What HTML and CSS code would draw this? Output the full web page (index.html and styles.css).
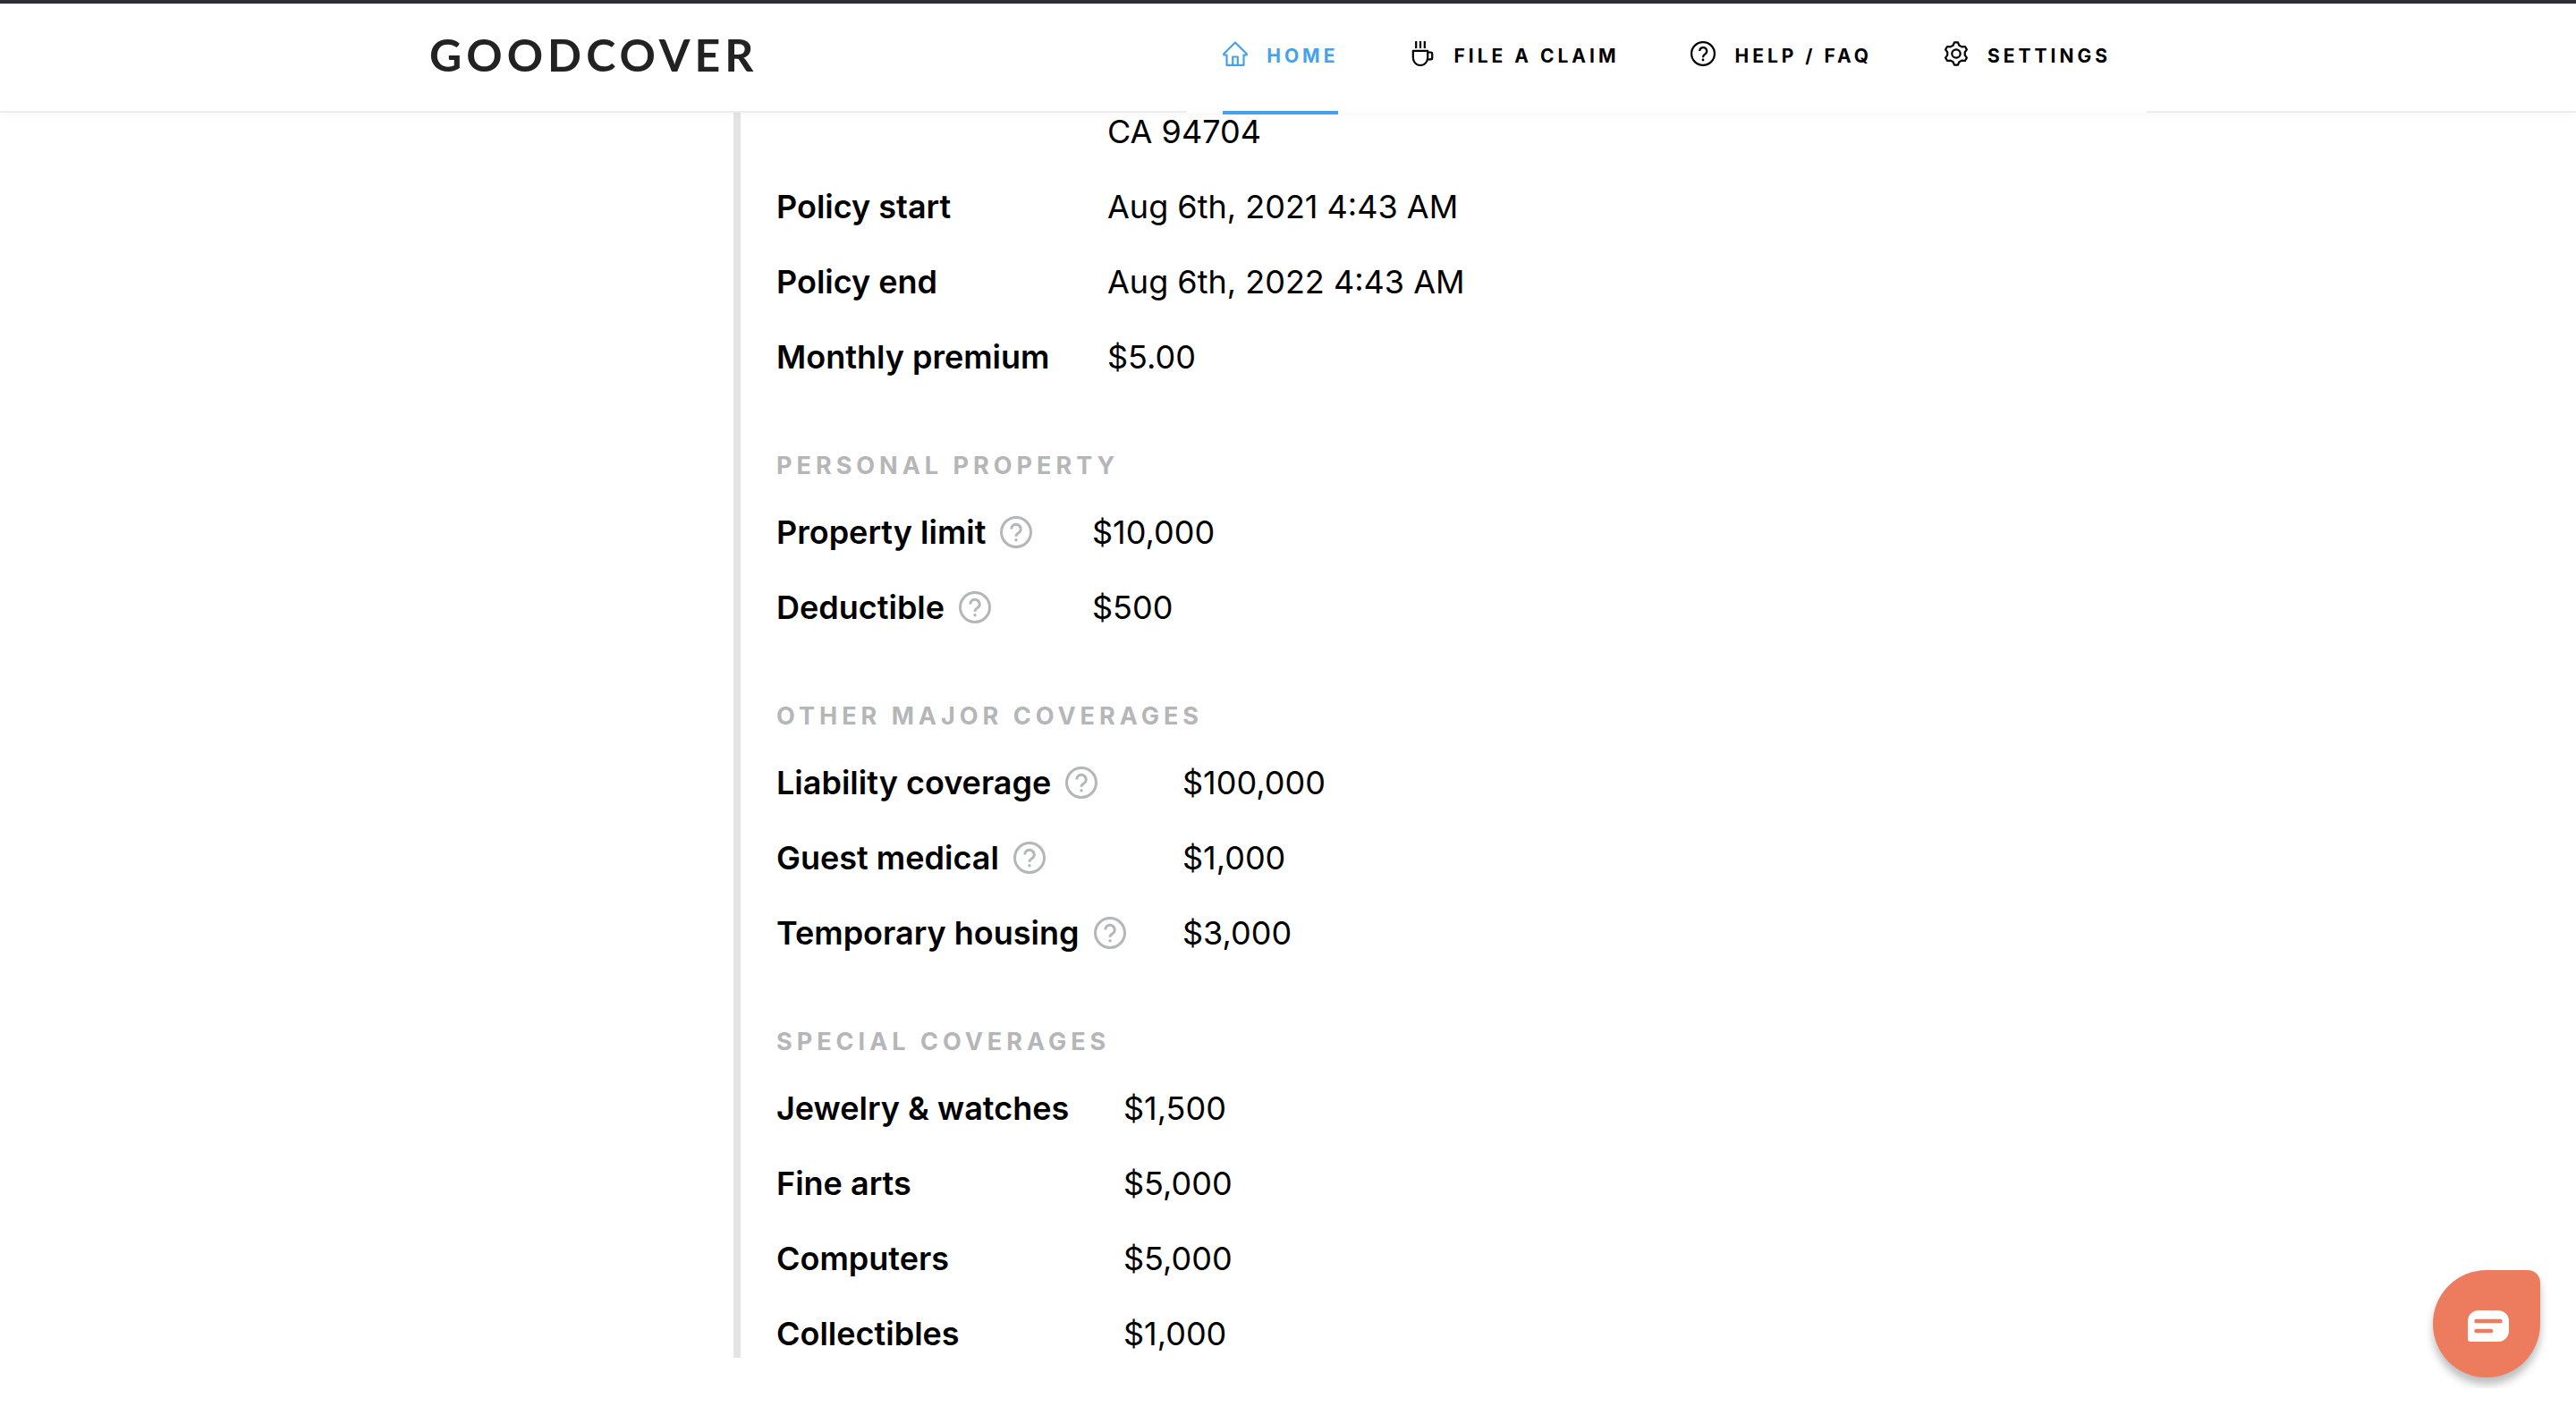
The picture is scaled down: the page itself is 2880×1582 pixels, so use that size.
FILE: index.html
```html
<!DOCTYPE html>
<html lang="en">
<head>
<meta charset="utf-8">
<title>Goodcover</title>
<link rel="stylesheet" href="styles.css">
</head>
<body>
<svg class="sprite" width="0" height="0" aria-hidden="true">
  <symbol id="help" viewBox="0 0 36 36">
    <circle cx="18" cy="18" r="16.5"/>
    <path d="M12.8 14.4a5.2 5.2 0 1 1 7.6 4.6c-1.700.9-2.400 1.700-2.400 3.800"/>
    <circle class="dot" cx="18" cy="26.700" r="1.700"/>
  </symbol>
</svg>
<header class="topbar">
  <div class="topbar-inner">
    <a class="logo" href="#">GOODCOVER</a>
    <nav class="nav">
      <a class="nav-link active" href="#">
        <svg class="nav-icon" viewBox="0 0 28 28"><path d="M4.500 26.800V15.500H1.200v-1.200L14 1.500l12.800 12.800v1.200h-3.300v11.300z"/><path d="M11.200 26.800v-9.300h5.600v9.300"/></svg>
        <span>HOME</span>
      </a>
      <a class="nav-link" href="#">
        <svg class="nav-icon" viewBox="0 0 28 28"><path d="M3.800 10.800h16.400v7.200c0 5-3.200 9-8.200 9s-8.200-4-8.200-9zM20.200 12.500h3.600q1.400 0 1.400 1.400v5q0 1.400-1.400 1.400h-3.900M7.200 0v8M12 0v8M16.800 0v8"/></svg>
        <span>FILE A CLAIM</span>
      </a>
      <a class="nav-link" href="#">
        <svg class="nav-icon" viewBox="0 0 28 28"><circle cx="14" cy="14" r="12.900"/><path d="M10.200 11a4 4 0 1 1 5.800 3.700c-1.300.7-2 1.500-2 3.500"/><circle class="dot" cx="14" cy="21" r="1.400"/></svg>
        <span>HELP / FAQ</span>
      </a>
      <a class="nav-link" href="#">
        <svg class="nav-icon" viewBox="0 0 28 28"><circle cx="14" cy="14" r="4.700"/><path d="M10.600 4.700 12 1.400h4l1.400 3.300 2.950 1.700L23.900 6l2 3.400-2.150 2.900v3.400l2.150 2.900-2 3.400-3.550-.4-2.950 1.700-1.400 3.300h-4l-1.400-3.300-2.950-1.700-3.550.4-2-3.400 2.150-2.900v-3.400L2.100 9.400l2-3.400 3.550.4z"/></svg>
        <span>SETTINGS</span>
      </a>
    </nav>
  </div>
</header>

<main class="policy">
  <section class="group">
    <table class="facts facts-policy">
      <tr><td></td><td>CA 94704</td></tr>
      <tr><th scope="row">Policy start</th><td>Aug 6th, 2021 4:43 AM</td></tr>
      <tr><th scope="row">Policy end</th><td>Aug 6th, 2022 4:43 AM</td></tr>
      <tr><th scope="row">Monthly premium</th><td>$5.00</td></tr>
    </table>
  </section>

  <section class="group">
    <h2>PERSONAL PROPERTY</h2>
    <table class="facts facts-property">
      <tr><th scope="row"><span class="label">Property limit <button class="help" type="button" aria-label="About property limit"><svg><use href="#help"/></svg></button></span></th><td>$10,000</td></tr>
      <tr><th scope="row"><span class="label">Deductible <button class="help" type="button" aria-label="About deductible"><svg><use href="#help"/></svg></button></span></th><td>$500</td></tr>
    </table>
  </section>

  <section class="group">
    <h2>OTHER MAJOR COVERAGES</h2>
    <table class="facts facts-major">
      <tr><th scope="row"><span class="label">Liability coverage <button class="help" type="button" aria-label="About liability coverage"><svg><use href="#help"/></svg></button></span></th><td>$100,000</td></tr>
      <tr><th scope="row"><span class="label">Guest medical <button class="help" type="button" aria-label="About guest medical"><svg><use href="#help"/></svg></button></span></th><td>$1,000</td></tr>
      <tr><th scope="row"><span class="label">Temporary housing <button class="help" type="button" aria-label="About temporary housing"><svg><use href="#help"/></svg></button></span></th><td>$3,000</td></tr>
    </table>
  </section>

  <section class="group">
    <h2>SPECIAL COVERAGES</h2>
    <table class="facts facts-special">
      <tr><th scope="row">Jewelry &amp; watches</th><td>$1,500</td></tr>
      <tr><th scope="row">Fine arts</th><td>$5,000</td></tr>
      <tr><th scope="row">Computers</th><td>$5,000</td></tr>
      <tr><th scope="row">Collectibles</th><td>$1,000</td></tr>
    </table>
  </section>
</main>

<button class="chat" type="button" aria-label="Open chat">
  <svg viewBox="0 0 46 35"><path fill="#fff" d="M12 0h22a12 12 0 0 1 12 12v11a12 12 0 0 1-12 12H3a3 3 0 0 1-3-3V12A12 12 0 0 1 12 0z"/><path stroke="#ed7b5e" stroke-width="4.400" stroke-linecap="round" d="M9.500 12h27M9.500 23h16.500"/></svg>
</button>
</body>
</html>
```
FILE: styles.css
```css
* { box-sizing: border-box; }

body {
  margin: 0;
  background: #fff;
  color: #000;
  font-family: Inter, "Liberation Sans", sans-serif;
  font-size: 36px;
  line-height: 54px;
}

.sprite { position: absolute; }

/* Header */
.topbar {
  position: sticky;
  top: 0;
  z-index: 2;
  height: 126px;
  background: #fff;
  border-top: 4px solid #2e2c34;
  border-bottom: 2px solid #ededed;
  box-shadow: 0 2px 10px rgba(0, 0, 0, 0.04);
}

.topbar-inner {
  display: flex;
  justify-content: space-between;
  max-width: 1920px;
  height: 122px;
  margin: 0 auto;
}

.logo {
  align-self: center;
  padding-bottom: 8px;
  color: #222;
  font-family: Lato, sans-serif;
  font-size: 50px;
  font-weight: 700;
  letter-spacing: 5px;
  text-decoration: none;
}

.nav {
  display: flex;
  gap: 80px;
  padding: 0 40px;
  background: #fff;
}

.nav-link {
  display: flex;
  align-items: center;
  gap: 21px;
  height: 124px;
  padding-bottom: 2px;
  border-bottom: 4px solid transparent;
  color: #000;
  font-size: 21px;
  font-weight: 700;
  letter-spacing: 4px;
  text-decoration: none;
}

.nav-link.active {
  color: #45a2ea;
  border-bottom-color: #45a2ea;
}

.nav-icon {
  width: 28px;
  height: 28px;
  margin-bottom: 6px;
  fill: none;
  stroke: currentColor;
  stroke-width: 2.2px;
  stroke-linejoin: round;
}

.dot {
  fill: currentColor;
  stroke: none;
}

/* Policy details */
.policy {
  max-width: 1240px;
  margin: -6px auto 64px;
  padding-left: 40px;
  border-left: 8px solid #e4e4e4;
}

.group + .group { padding-top: 78px; }

h2 {
  margin: 0 0 30px;
  color: #b5b6b8;
  font-size: 27px;
  font-weight: 700;
  line-height: 34px;
  letter-spacing: 5px;
}

.facts {
  width: 100%;
  table-layout: fixed;
  border-collapse: collapse;
}

.facts th,
.facts td {
  padding: 0 0 30px;
  text-align: left;
}

.facts th { font-weight: 600; }

.facts tr:last-child > * { padding-bottom: 0; }

.facts-policy tr > :first-child { width: 370px; }
.facts-property th { width: 353px; }
.facts-major th { width: 454px; }
.facts-special th { width: 388px; }

.label {
  display: flex;
  align-items: center;
  gap: 16px;
}

.help {
  display: flex;
  padding: 0;
  border: 0;
  background: none;
  color: #b5b6b8;
}

.help svg {
  width: 36px;
  height: 36px;
  fill: none;
  stroke: currentColor;
  stroke-width: 3px;
}

/* Chat launcher */
.chat {
  position: fixed;
  right: 40px;
  bottom: 42px;
  display: flex;
  align-items: center;
  justify-content: center;
  width: 120px;
  height: 120px;
  padding: 4px 0 0 4px;
  border: 0;
  border-radius: 60px 14px 60px 60px;
  background: #ed7b5e;
  box-shadow: 0 8px 10px rgba(0, 0, 0, 0.26);
  clip-path: inset(-20px -20px -12px -20px);
}

.chat svg {
  width: 46px;
  height: 35px;
}
```
